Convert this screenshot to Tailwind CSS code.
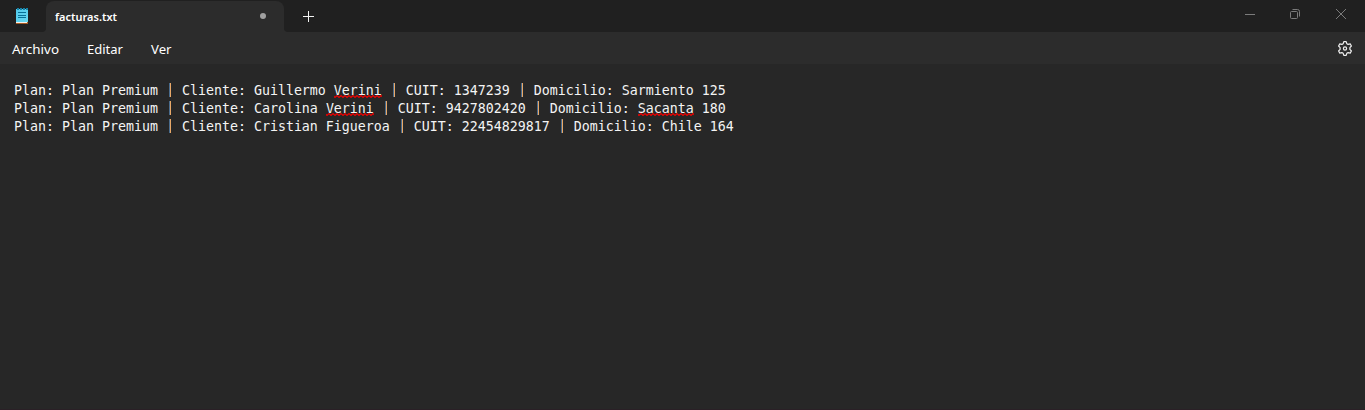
<!DOCTYPE html>
<html lang="es">
<head>
<meta charset="utf-8">
<title>facturas.txt</title>
<script src="https://cdn.jsdelivr.net/npm/@tailwindcss/browser@4"></script>
</head>
<body class="h-[410px] w-[1365px] overflow-hidden bg-[#272727] font-['Noto_Sans',sans-serif] text-white">
<div class="flex h-full flex-col">
  <header class="flex h-8 shrink-0 items-end bg-[#202020]">
    <div class="flex h-8 w-[38px] pl-4 pt-2">
      <svg class="h-4 w-3" viewBox="0 0 12 16">
        <defs><linearGradient id="p" x2="1" y2="1"><stop stop-color="#50c8ea"/><stop offset="1" stop-color="#68d8f0"/></linearGradient></defs>
        <path d="M0 1H12V14H0Z" fill="url(#p)"/>
        <path d="M0 14H12V16H0Z" fill="#a85a22"/><path d="M0 14H11V15H0Z" fill="#f2efea"/>
        <path d="M1 0H3V2H1ZM4 0H6V2H4ZM7 0H9V2H7ZM10 0H12V2H10Z" fill="#1683a8"/>
        <path d="M2 4H10V5H2ZM2 7H10V8H2ZM2 9H10V10H2Z" fill="#087096"/>
      </svg>
    </div>
    <svg class="h-2 w-2" viewBox="0 0 8 8"><path d="M8 0V8H4Q8 8 8 4Z" fill="#2c2c2c"/></svg>
    <div class="flex h-[31px] w-[238px] items-center rounded-t-lg bg-[#2c2c2c] pl-[9px] pr-[18px]">
      <span class="flex-1 text-[11px] leading-4 font-semibold"><svg class="inline h-4 w-[62px] overflow-visible" viewBox="0 0 62 16"><text x="0" y="12" textLength="62" lengthAdjust="spacingAndGlyphs" fill="#fff">facturas.txt</text></svg></span>
      <span class="mb-px size-1.5 rounded-full bg-[#a0a0a0]"></span>
    </div>
    <svg class="h-2 w-2" viewBox="0 0 8 8"><path d="M0 0V8H4Q0 8 0 4Z" fill="#2c2c2c"/></svg>
    <div class="flex h-8 flex-1 pl-[11px] pt-[11px]">
      <svg class="size-[11px]" viewBox="0 0 11 11"><path d="M0 5.5H11M5.5 0V11" stroke="#f2f2f2"/></svg>
    </div>
    <div class="flex h-8 w-[120px] pr-[19px] pt-[9px]">
      <svg class="size-[10px]" viewBox="0 0 10 10"><path d="M0 5.5H10" stroke="#7b7b7b"/></svg>
      <svg class="ml-[35px] size-[10px]" viewBox="0 0 10 10" fill="none" stroke="#7b7b7b"><rect x=".5" y="2.5" width="7" height="7" rx="1"/><path d="M2.5 .5H7.5Q9.5 .5 9.5 2.5V7.5"/></svg>
      <svg class="ml-9 size-[10px]" viewBox="0 0 10 10"><path d="M0 0L10 10M10 0L0 10" stroke="#7b7b7b"/></svg>
    </div>
  </header>
  <nav class="flex h-8 shrink-0 items-center bg-[#2c2c2c] pl-3 pr-[13px] text-[13px]">
    <svg class="h-5 w-full flex-1 overflow-visible font-['Noto_Sans']" fill="#fff"><text x="0" y="16" textLength="47" lengthAdjust="spacingAndGlyphs">Archivo</text><text x="75" y="16" textLength="36" lengthAdjust="spacingAndGlyphs">Editar</text><text x="139" y="16" textLength="20.5" lengthAdjust="spacingAndGlyphs">Ver</text></svg>
    <svg class="size-[15px] overflow-visible" viewBox="-.5 0 15 15" fill="none" stroke="#eee" stroke-width="1.2" stroke-linejoin="round"><path d="M6.3 .6H8.7L9.3 2.7L10.6 3.4L12.7 2.9L13.9 5L12.4 6.6V8.4L13.9 10L12.7 12.1L10.6 11.6L9.3 12.3L8.7 14.4H6.3L5.7 12.3L4.4 11.6L2.3 12.1L1.1 10L2.6 8.4V6.6L1.1 5L2.3 2.9L4.4 3.4L5.7 2.7Z"/><circle cx="7.5" cy="7.5" r="1.6"/></svg>
  </nav>
  <svg class="absolute size-0"><defs><pattern id="wave" width="4" height="3" patternUnits="userSpaceOnUse"><path d="M-1 .5L1 2.5L3 .5L5 2.5" fill="none" stroke="#f00000" stroke-width="1.1"/></pattern></defs></svg>
  <main id="doc" class="flex-1 whitespace-pre pl-[14px] pt-[18px] font-['DejaVu_Sans_Mono',monospace] text-[13.29px] leading-[18px] text-[#f4f4f4]"></main>
  <footer class="h-px shrink-0 bg-[#2a2026]"></footer>
</div>
<script>
const lines = [
  'Plan: Plan Premium | Cliente: Guillermo ~Verini~ | CUIT: 1347239 | Domicilio: Sarmiento 125',
  'Plan: Plan Premium | Cliente: Carolina ~Verini~ | CUIT: 9427802420 | Domicilio: ~Sacanta~ 180',
  'Plan: Plan Premium | Cliente: Cristian Figueroa | CUIT: 22454829817 | Domicilio: Chile 164'
];
document.getElementById('doc').innerHTML = lines.map(l => '<div class="h-[18px]">' + l
  .replace(/\|/g, '<span class="mt-px inline-block h-[14px] w-2 bg-[linear-gradient(90deg,transparent_3px,#496b8c_3px,#496b8c_4px,#e8a868_4px,#e8a868_5px,transparent_5px)] align-top leading-[14px] text-transparent">|</span>')
  .replace(/~(.*?)~/g, '<span class="relative inline-block h-[18px] align-top">$1<svg class="absolute top-[13px] left-0 h-[3px] w-full"><rect width="100%" height="3" fill="url(#wave)"/></svg></span>') + '</div>').join('');
</script>
</body>
</html>
